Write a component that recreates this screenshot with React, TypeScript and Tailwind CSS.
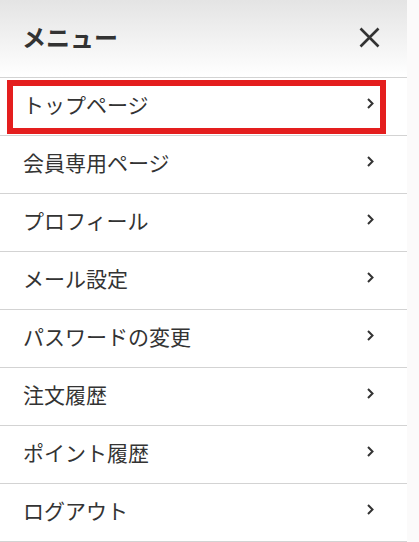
// メニュー項目
const items = [
  "トップページ",
  "会員専用ページ",
  "プロフィール",
  "メール設定",
  "パスワードの変更",
  "注文履歴",
  "ポイント履歴",
  "ログアウト",
];

export default function App() {
  return (
    <div
      className="flex h-[542px] w-[419px] overflow-hidden bg-[#fbfafa] text-[#333]"
      style={{ fontFamily: '"Noto Sans CJK JP", "Liberation Sans", sans-serif' }}
    >
      <div className="flex w-[407px] flex-col bg-white">
        {/* ヘッダー */}
        <div className="flex h-[78px] items-center justify-between border-b border-[#d3d3d3] bg-gradient-to-b from-[#e4e4e4] to-white pl-[22px] pr-[27px]">
          <h1 className="pb-1 text-[24px] font-bold leading-none">メニュー</h1>
          <svg width="21" height="21" viewBox="0 0 21 21" className="mb-[2px]">
            <path d="M1.5 1.5 L19.5 19.5 M19.5 1.5 L1.5 19.5" stroke="#333" strokeWidth="2.6" fill="none" />
          </svg>
        </div>
        {/* リスト */}
        <ul>
          {items.map((label, i) => (
            <li
              key={label}
              className="relative flex h-[58px] items-center justify-between border-b border-[#d3d3d3] pl-[23px] pr-[33px]"
            >
              <span className="pb-1 text-[21px] leading-none">{label}</span>
              <svg width="7" height="11" viewBox="0 0 7 11" className="mb-[7px]">
                <polyline points="1,1 5.5,5.5 1,10" stroke="#333" strokeWidth="2" fill="none" />
              </svg>
              {i === 0 && (
                <div className="pointer-events-none absolute left-[7px] top-[2px] h-[54px] w-[379px] border-[6px] border-[#e41e1e]" />
              )}
            </li>
          ))}
        </ul>
      </div>
    </div>
  );
}
